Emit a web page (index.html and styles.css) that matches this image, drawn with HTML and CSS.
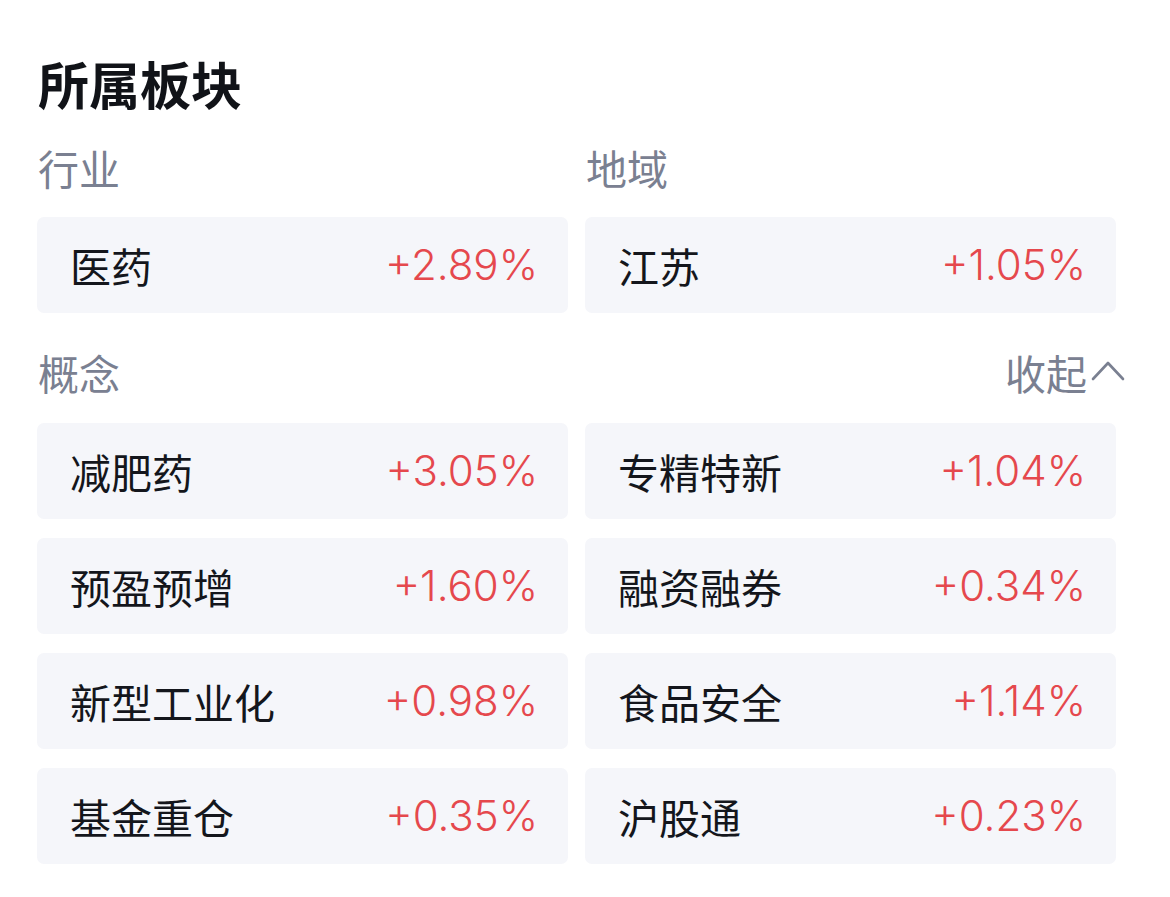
FILE: index.html
```html
<!DOCTYPE html>
<html lang="zh">
<head>
<meta charset="utf-8">
<link rel="stylesheet" href="styles.css">
</head>
<body>
<div class="page">
  <h1 class="title">所属板块</h1>
  <div class="grid top">
    <div class="col">
      <div class="label">行业</div>
      <div class="card"><span class="name">医药</span><span class="pct">+2.89%</span></div>
    </div>
    <div class="col">
      <div class="label">地域</div>
      <div class="card"><span class="name">江苏</span><span class="pct">+1.05%</span></div>
    </div>
  </div>
  <div class="head">
    <div class="label">概念</div>
    <div class="toggle">收起<svg class="chev" viewBox="0 0 34 22" width="34" height="22"><path d="M2 20 L17 4 L32 20" fill="none" stroke="#7a8091" stroke-width="2.6" stroke-linecap="round" stroke-linejoin="round"/></svg></div>
  </div>
  <div class="grid rows">
    <div class="card"><span class="name">减肥药</span><span class="pct">+3.05%</span></div>
    <div class="card"><span class="name">专精特新</span><span class="pct">+1.04%</span></div>
    <div class="card"><span class="name">预盈预增</span><span class="pct">+1.60%</span></div>
    <div class="card"><span class="name">融资融券</span><span class="pct">+0.34%</span></div>
    <div class="card"><span class="name">新型工业化</span><span class="pct">+0.98%</span></div>
    <div class="card"><span class="name">食品安全</span><span class="pct">+1.14%</span></div>
    <div class="card"><span class="name">基金重仓</span><span class="pct">+0.35%</span></div>
    <div class="card"><span class="name">沪股通</span><span class="pct">+0.23%</span></div>
  </div>
</div>
</body>
</html>
```

FILE: styles.css
```css
* { box-sizing: border-box; }
html, body { margin: 0; padding: 0; background: #ffffff; }
body {
  font-family: "Noto Sans CJK SC", "Noto Sans", sans-serif;
  color: #14161c;
}
.page {
  width: 1170px;
  padding: 48px 0 0 37px;
}
.title {
  margin: 0;
  height: 70px;
  line-height: 70px;
  font-size: 51px;
  font-weight: 700;
  color: #111318;
  padding-left: 1px;
}
.grid {
  display: grid;
  grid-template-columns: 531px 531px;
  column-gap: 17px;
}
.top { margin-top: 24px; }
.col { display: flex; flex-direction: column; }
.label {
  height: 50px;
  line-height: 50px;
  font-size: 41px;
  color: #7a8091;
  padding-left: 1px;
  margin-bottom: 25px;
}
.card {
  height: 96px;
  background: #f5f6fa;
  border-radius: 7px;
  display: flex;
  align-items: center;
  justify-content: space-between;
  padding: 0 30px 0 33px;
}
.name {
  font-size: 41px;
  color: #14161c;
  line-height: 1;
}
.pct {
  font-family: "Inter", "Liberation Sans", sans-serif;
  font-weight: 300;
  font-size: 42px;
  color: #e5484d;
  line-height: 1;
}
.head {
  margin-top: 34px;
  width: 1088px;
  display: flex;
  justify-content: space-between;
  align-items: flex-start;
}
.head .label { margin-bottom: 26px; }
.toggle {
  height: 50px;
  line-height: 50px;
  font-size: 41px;
  color: #7a8091;
  display: flex;
  align-items: center;
}
.chev { margin-left: 4px; margin-top: -4px; }
.rows { row-gap: 19px; }
```
